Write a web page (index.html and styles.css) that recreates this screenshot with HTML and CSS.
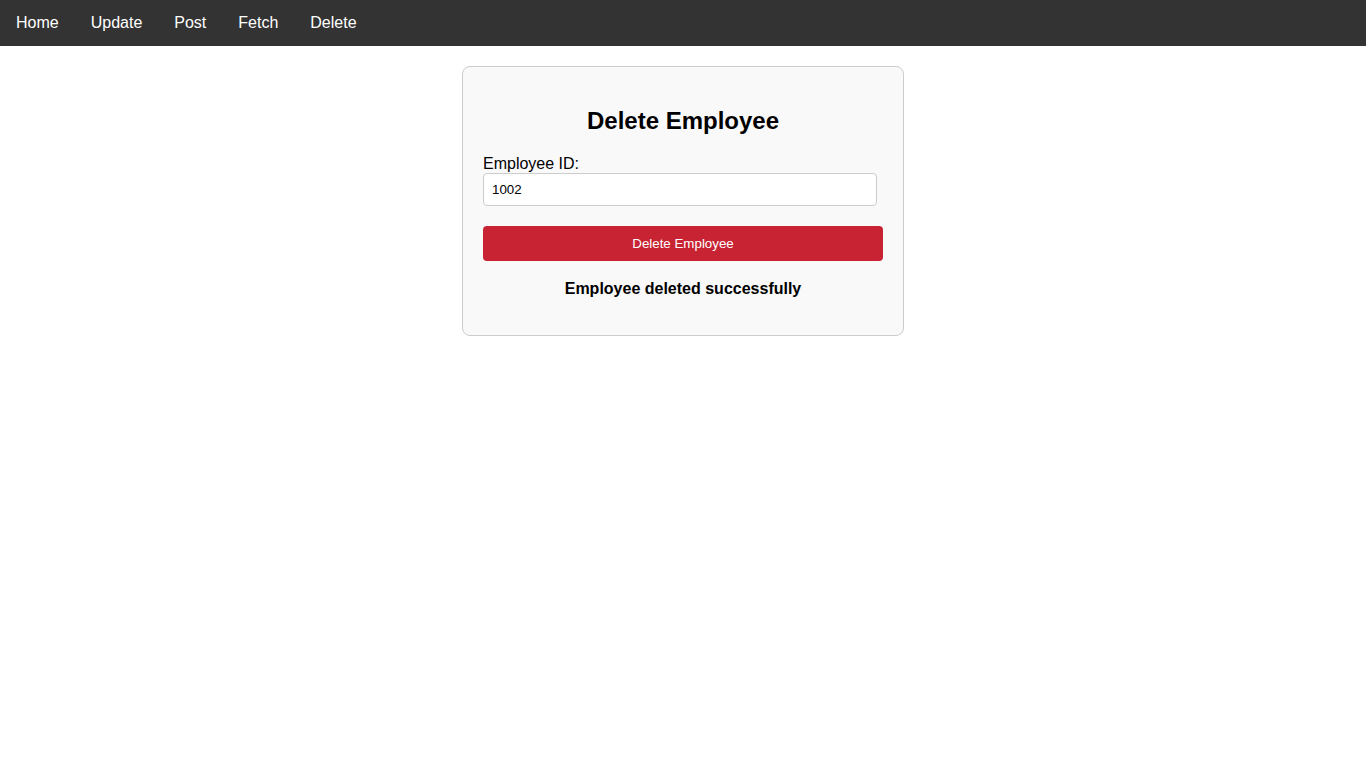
FILE: index.html
```html
<!DOCTYPE html>
<html lang="en">
<head>
<meta charset="UTF-8">
<title>Delete Employee</title>
<link rel="stylesheet" href="styles.css">
</head>
<body>
<nav class="topnav">
  <a href="#">Home</a>
  <a href="#">Update</a>
  <a href="#">Post</a>
  <a href="#">Fetch</a>
  <a href="#">Delete</a>
</nav>
<main class="container">
  <h2 class="title">Delete Employee</h2>
  <form class="form">
    <label class="label" for="empId">Employee ID:</label>
    <input class="input" id="empId" type="text" value="1002">
    <button class="btn-delete" type="button">Delete Employee</button>
  </form>
  <p class="message">Employee deleted successfully</p>
</main>
</body>
</html>
```
FILE: styles.css
```css
body {
  margin: 0;
  font-family: "Liberation Sans", Arial, sans-serif;
  background: #fff;
  color: #000;
}
.topnav {
  background: #333;
  display: flex;
  height: 46px;
}
.topnav a {
  color: #fff;
  text-decoration: none;
  font-size: 16px;
  padding: 14px 16px;
  line-height: 18px;
}
.container {
  width: 400px;
  margin: 20px auto 0;
  padding: 20px;
  background: #f9f9f9;
  border: 1px solid #ccc;
  border-radius: 8px;
}
.title {
  text-align: center;
  font-size: 24px;
  margin: 20px 0;
}
.form {
  display: flex;
  flex-direction: column;
  align-items: flex-start;
}
.label {
  display: block;
  font-size: 16px;
  line-height: 18px;
}
.input {
  box-sizing: border-box;
  width: 394px;
  height: 33px;
  padding: 8px;
  border: 1px solid #ccc;
  border-radius: 4px;
  font-family: "Liberation Sans", Arial, sans-serif;
  font-size: 13.33px;
  background: #fff;
  color: #000;
}
.btn-delete {
  margin-top: 20px;
  width: 400px;
  height: 35px;
  border: none;
  border-radius: 4px;
  background: #c82333;
  color: #fff;
  font-family: "Liberation Sans", Arial, sans-serif;
  font-size: 13.33px;
  cursor: pointer;
}
.message {
  text-align: center;
  font-weight: bold;
  font-size: 16px;
  line-height: 18px;
  margin: 19px 0 17px;
}
```
